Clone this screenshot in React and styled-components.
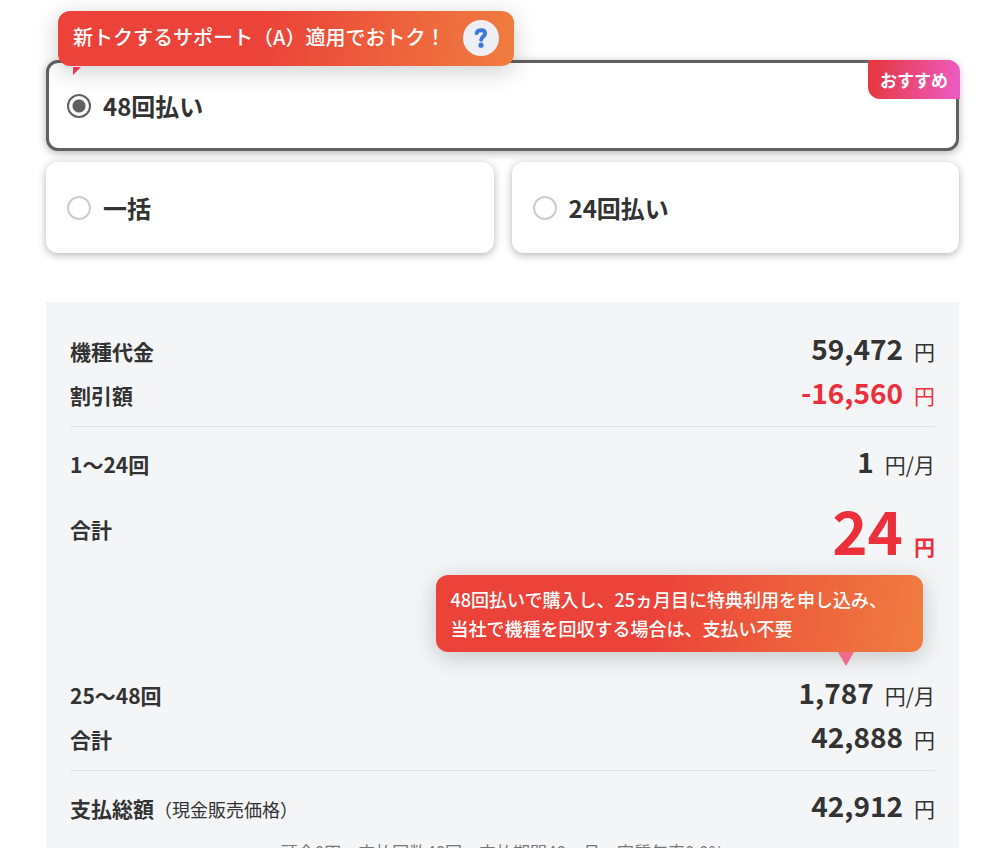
import React, { useState } from 'react';
import styled, { createGlobalStyle } from 'styled-components';

const plans = [
    { id: 'p48', label: '48回払い', recommended: true },
    { id: 'p1', label: '一括' },
    { id: 'p24', label: '24回払い' },
];

function Amount({ value, unit, tone, size }) {
    return (
        <Price $tone={tone} $size={size}>
            <strong>{value}</strong>
            <span>{unit}</span>
        </Price>
    );
}

function App() {
    const [selected, setSelected] = useState('p48');

    return (
        <Page>
            <GlobalStyle />
            <PlanGrid>
                <SupportBubble>
                    新トクするサポート（A）適用でおトク！
                    <HelpButton type="button" aria-label="ヘルプ">
                        <svg width="14" height="20" viewBox="0 0 14 20" fill="none">
                            <path
                                d="M2.6 5.2C3.2 3.2 4.8 2.3 7 2.3c2.5 0 4.1 1.2 4.1 3.2 0 3-3.9 3.1-3.9 6.3"
                                stroke="#3a7bd8"
                                strokeWidth="4"
                                strokeLinecap="round"
                                strokeLinejoin="round"
                            />
                            <circle cx="7" cy="17.2" r="2.6" fill="#3a7bd8" />
                        </svg>
                    </HelpButton>
                </SupportBubble>
                {plans.map((plan) => (
                    <PlanCard key={plan.id} $active={selected === plan.id} $wide={plan.recommended}>
                        <Radio
                            type="radio"
                            name="plan"
                            value={plan.id}
                            checked={selected === plan.id}
                            onChange={() => setSelected(plan.id)}
                        />
                        {plan.label}
                        {plan.recommended && <Badge>おすすめ</Badge>}
                    </PlanCard>
                ))}
            </PlanGrid>

            <Summary>
                <Rows>
                    <Row>
                        <dt>機種代金</dt>
                        <Amount value="59,472" unit="円" />
                    </Row>
                    <Row>
                        <dt>割引額</dt>
                        <Amount value="-16,560" unit="円" tone="red" />
                    </Row>
                </Rows>
                <Rows $divided>
                    <Row>
                        <dt>1〜24回</dt>
                        <Amount value="1" unit="円/月" />
                    </Row>
                    <Row $tall>
                        <dt>合計</dt>
                        <Amount value="24" unit="円" tone="red" size="large" />
                    </Row>
                </Rows>
                <NoticeBubble>
                    48回払いで購入し、25ヵ月目に特典利用を申し込み、
                    <br />
                    当社で機種を回収する場合は、支払い不要
                </NoticeBubble>
                <Rows>
                    <Row>
                        <dt>25〜48回</dt>
                        <Amount value="1,787" unit="円/月" />
                    </Row>
                    <Row>
                        <dt>合計</dt>
                        <Amount value="42,888" unit="円" />
                    </Row>
                </Rows>
                <Rows $divided>
                    <Row>
                        <dt>
                            支払総額<small>（現金販売価格）</small>
                        </dt>
                        <Amount value="42,912" unit="円" />
                    </Row>
                </Rows>
                <Footnote>頭金0円、支払回数48回、支払期間48ヵ月、実質年率0.0%</Footnote>
            </Summary>
        </Page>
    );
}

const GlobalStyle = createGlobalStyle`
  * {
    box-sizing: border-box;
  }

  body {
    margin: 0;
    background-color: #fff;
    color: #333;
    font-family: 'Noto Sans CJK JP', 'Noto Sans', sans-serif;
  }
`;

const Page = styled.main`
  padding: 60px 41px 0 46px;
`;

const PlanGrid = styled.div`
  position: relative;
  display: grid;
  grid-template-columns: 1fr 1fr;
  gap: 11px 18px;
`;

const PlanCard = styled.label`
  position: relative;
  display: flex;
  align-items: center;
  gap: 12px;
  grid-column: ${({ $wide }) => ($wide ? '1 / -1' : 'auto')};
  height: 91px;
  padding: 0 ${({ $active }) => ($active ? '18px' : '21px')};
  border: ${({ $active }) => ($active ? '3px solid #606060' : 'none')};
  border-radius: 12px;
  background-color: #fff;
  box-shadow: 0 2px 8px rgba(0, 0, 0, 0.3);
  font-size: 24px;
  font-weight: 700;
  cursor: pointer;
`;

const Radio = styled.input`
  appearance: none;
  width: 24px;
  height: 24px;
  margin: 0;
  border: 2px solid #ccc;
  border-radius: 50%;
  background-color: #fff;

  &:checked {
    border-color: #606060;
    background: radial-gradient(circle, #606060 6px, #fff 7px);
  }
`;

const Badge = styled.span`
  position: absolute;
  top: -3px;
  right: -4px;
  padding: 0 12px;
  border-radius: 0 12px 0 12px;
  background: linear-gradient(100deg, #e63946 10%, #ee5bc0 95%);
  color: #fff;
  font-size: 17px;
  line-height: 39px;
`;

const Bubble = styled.div`
  border-radius: 12px;
  background: linear-gradient(100deg, #eb4339 45%, #ef7d40);
  box-shadow: 0 5px 24px rgba(0, 0, 0, 0.2);
  color: #fff;
  font-weight: 500;
`;

const SupportBubble = styled(Bubble)`
  position: absolute;
  z-index: 1;
  top: -49px;
  left: 12px;
  display: flex;
  align-items: flex-start;
  gap: 18px;
  height: 55px;
  padding: 9px 15px;
  font-size: 20px;
  line-height: 34px;
  white-space: nowrap;

  &::after {
    content: '';
    position: absolute;
    top: 56px;
    left: 15px;
    border-top: 8px solid #ee3350;
    border-right: 8px solid transparent;
  }
`;

const HelpButton = styled.button`
  display: flex;
  align-items: center;
  justify-content: center;
  width: 36px;
  height: 36px;
  padding: 0;
  border: none;
  border-radius: 50%;
  background-color: #eeeff4;
  cursor: pointer;
`;

const Summary = styled.section`
  margin-top: 49px;
  padding: 24px 24px 40px;
  background-color: #f4f5f7;
`;

const Rows = styled.dl`
  margin: ${({ $divided }) => ($divided ? '12px 0 0' : '0')};
  padding-top: ${({ $divided }) => ($divided ? '12px' : '0')};
  border-top: ${({ $divided }) => ($divided ? '1px solid #dfe1e4' : 'none')};
`;

const Row = styled.div`
  display: flex;
  justify-content: space-between;
  align-items: ${({ $tall }) => ($tall ? 'center' : 'baseline')};
  height: ${({ $tall }) => ($tall ? '92px' : '44px')};
  font-size: 21px;
  line-height: 44px;

  dt {
    font-weight: 700;
  }

  small {
    font-size: 18px;
    font-weight: 400;
  }
`;

const Price = styled.dd`
  display: flex;
  align-items: baseline;
  gap: 11px;
  margin: 0;
  color: ${({ $tone }) => ($tone === 'red' ? '#eb303b' : 'inherit')};
  font-weight: ${({ $size }) => ($size === 'large' ? 700 : 400)};

  strong {
    font-size: ${({ $size }) => ($size === 'large' ? '60px' : '28px')};
    font-weight: 700;
    line-height: ${({ $size }) => ($size === 'large' ? '80px' : '44px')};
  }
`;

const NoticeBubble = styled(Bubble)`
  position: relative;
  width: fit-content;
  margin: 0 12px 18px auto;
  padding: 10px 36px 9px 15px;
  font-size: 18px;
  line-height: 29px;

  &::after {
    content: '';
    position: absolute;
    top: 100%;
    right: 69px;
    border: 8px solid transparent;
    border-top: 14px solid #ef6b8a;
    border-bottom: none;
  }
`;

const Footnote = styled.p`
  margin: 12px 0 0;
  color: #777;
  font-size: 17px;
  line-height: 26px;
  text-align: center;
`;

export default App;
